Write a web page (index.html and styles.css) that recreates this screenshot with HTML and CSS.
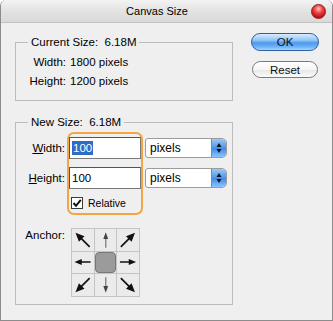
FILE: index.html
```html
<!DOCTYPE html>
<html lang="en">

<head>
    <meta charset="UTF-8">
    <title>Canvas Size</title>
    <link rel="stylesheet" href="styles.css">
</head>

<body>
    <div class="window">
        <div class="titlebar">
            <div class="title">Canvas Size</div>
            <div class="close"></div>
        </div>
        <div class="content">
            <div class="main">
                <fieldset class="group current">
                    <legend>Current Size:&nbsp; 6.18M</legend>
                    <div class="info">
                        <span class="info-label">Width:</span><span>1800 pixels</span>
                        <span class="info-label">Height:</span><span>1200 pixels</span>
                    </div>
                </fieldset>
                <fieldset class="group new">
                    <legend>New Size:&nbsp; 6.18M</legend>
                    <div class="size-row">
                        <div class="labels">
                            <label><u>W</u>idth:</label>
                            <label><u>H</u>eight:</label>
                        </div>
                        <div class="highlight">
                            <div class="field"><span class="selected">100</span></div>
                            <div class="field">100</div>
                            <div class="check-row">
                                <span class="checkbox">
                                    <svg width="10" height="10" viewBox="0 0 10 10">
                                        <polyline points="1.5,5 4,7.8 8.8,1.8" fill="none" stroke="#111" stroke-width="2" />
                                    </svg>
                                </span>
                                Relative
                            </div>
                        </div>
                        <div class="units">
                            <div class="select">
                                <span class="select-text">pixels</span>
                                <span class="stepper">
                                    <svg width="14" height="18" viewBox="0 0 14 18">
                                        <polygon points="7,4 4.5,8 9.5,8" fill="#111" />
                                        <polygon points="7,14 4.5,10 9.5,10" fill="#111" />
                                    </svg>
                                </span>
                            </div>
                            <div class="select">
                                <span class="select-text">pixels</span>
                                <span class="stepper">
                                    <svg width="14" height="18" viewBox="0 0 14 18">
                                        <polygon points="7,4 4.5,8 9.5,8" fill="#111" />
                                        <polygon points="7,14 4.5,10 9.5,10" fill="#111" />
                                    </svg>
                                </span>
                            </div>
                        </div>
                    </div>
                    <div class="anchor-row">
                        <span class="anchor-label">Anchor:</span>
                        <div class="anchor-grid">
                            <div class="cell"><svg class="arrow nw" viewBox="0 0 22 22"><line x1="11" y1="21" x2="11" y2="8" /><polygon points="11,0.5 7,9.5 15,9.5" /></svg></div>
                            <div class="cell"><svg class="arrow n light" viewBox="0 0 22 22"><line x1="11" y1="19" x2="11" y2="8" /><polygon points="11,3 8.5,10 13.5,10" /></svg></div>
                            <div class="cell"><svg class="arrow ne" viewBox="0 0 22 22"><line x1="11" y1="21" x2="11" y2="8" /><polygon points="11,0.5 7,9.5 15,9.5" /></svg></div>
                            <div class="cell"><svg class="arrow w" viewBox="0 0 22 22"><line x1="11" y1="19" x2="11" y2="8" /><polygon points="11,2.5 8,10 14,10" /></svg></div>
                            <div class="cell"><div class="anchor-center"></div></div>
                            <div class="cell"><svg class="arrow e" viewBox="0 0 22 22"><line x1="11" y1="19" x2="11" y2="8" /><polygon points="11,2.5 8,10 14,10" /></svg></div>
                            <div class="cell"><svg class="arrow sw" viewBox="0 0 22 22"><line x1="11" y1="21" x2="11" y2="8" /><polygon points="11,0.5 7,9.5 15,9.5" /></svg></div>
                            <div class="cell"><svg class="arrow s light" viewBox="0 0 22 22"><line x1="11" y1="19" x2="11" y2="8" /><polygon points="11,3 8.5,10 13.5,10" /></svg></div>
                            <div class="cell"><svg class="arrow se" viewBox="0 0 22 22"><line x1="11" y1="21" x2="11" y2="8" /><polygon points="11,0.5 7,9.5 15,9.5" /></svg></div>
                        </div>
                    </div>
                </fieldset>
            </div>
            <div class="buttons">
                <button class="btn btn-ok">OK</button>
                <button class="btn btn-reset">Reset</button>
            </div>
        </div>
    </div>
</body>

</html>
```

FILE: styles.css
```css
* {
    box-sizing: border-box;
}

body {
    margin: 0;
    background-color: #ffffff;
    font-family: "Liberation Sans", Arial, sans-serif;
    font-size: 11.5px;
    color: #000000;
}

.window {
    width: 333px;
    height: 321px;
    background-color: #efefef;
    border: 1px solid #8c8c8c;
    border-top: none;
    border-radius: 6px 6px 0 0;
    overflow: hidden;
}

/* title bar */

.titlebar {
    height: 23px;
    display: flex;
    align-items: center;
    background: linear-gradient(#f3f3f3, #e4e4e4 45%, #d9d9d9);
    border-bottom: 1px solid #c2c2c2;
}

.title {
    flex: 1;
    text-align: center;
    font-size: 11px;
    padding-left: 2px;
}

.close {
    width: 15px;
    height: 15px;
    margin-right: 6px;
    border-radius: 50%;
    border: 1px solid #8e1a1a;
    background: radial-gradient(circle at 50% 30%, #ffc4c4 0, #f04848 35%, #c81414 70%, #9a0a0a 100%);
}

/* layout */

.content {
    display: flex;
    padding: 10px 0 0 14px;
}

.main {
    padding-top: 2px;
}

.group {
    width: 218px;
    margin: 0;
    border: 1px solid #bcbcbc;
}

.group legend {
    padding: 0 3px;
    line-height: 14px;
}

.current {
    padding: 4px 12px 9px 12px;
}

.info {
    display: grid;
    grid-template-columns: 38px auto;
    column-gap: 4px;
    line-height: 19px;
}

.info-label {
    text-align: right;
}

.new {
    margin-top: 14px;
    padding: 3px 4px 7px 8px;
}

.new legend {
    margin-left: 4px;
}

/* size inputs */

.size-row {
    display: flex;
    gap: 2px;
}

.labels {
    width: 41px;
    display: flex;
    flex-direction: column;
    gap: 8px;
    padding-top: 5px;
    text-align: right;
}

.labels label {
    line-height: 22px;
}

.highlight {
    width: 76px;
    display: flex;
    flex-direction: column;
    gap: 8px;
    padding-top: 3px;
    border: 2px solid #f5a445;
    border-radius: 7px;
}

.field {
    height: 22px;
    display: flex;
    align-items: center;
    padding-left: 2px;
    background-color: #ffffff;
    border: 1px solid #7a7a7a;
    border-top-color: #555555;
    border-left-color: #555555;
}

.selected {
    line-height: 14px;
    padding: 0 1px;
    background-color: #3169c6;
    color: #ffffff;
}

.check-row {
    height: 20px;
    margin-top: -4px;
    display: flex;
    align-items: center;
    gap: 5px;
    padding-left: 2px;
    font-size: 10.5px;
}

.checkbox {
    width: 12px;
    height: 12px;
    display: flex;
    align-items: center;
    justify-content: center;
    background-color: #ffffff;
    border: 1px solid #3a3a3a;
}

.units {
    display: flex;
    flex-direction: column;
    gap: 10px;
    padding-top: 6px;
}

.select {
    width: 82px;
    height: 20px;
    display: flex;
    background-color: #ffffff;
    border: 1px solid #9c9c9c;
    border-radius: 3px 5px 5px 3px;
    overflow: hidden;
}

.select-text {
    flex: 1;
    padding-left: 4px;
    line-height: 18px;
    font-size: 12px;
}

.stepper {
    width: 15px;
    display: flex;
    align-items: center;
    justify-content: center;
    border-left: 1px solid #5a8fd6;
    background: linear-gradient(#9cc8f8, #4e95ea 50%, #3f88e4 51%, #8cc4ff);
}

/* anchor */

.anchor-row {
    display: flex;
    gap: 6px;
    margin-top: 13px;
}

.anchor-label {
    width: 41px;
    text-align: right;
    line-height: 14px;
    white-space: nowrap;
}

.anchor-grid {
    display: grid;
    grid-template-columns: repeat(3, 21.5px);
    grid-template-rows: repeat(3, 21.5px);
    gap: 1px;
    padding: 1px;
    background-color: #c4c4c4;
}

.cell {
    display: flex;
    align-items: center;
    justify-content: center;
    background-color: #ebebeb;
}

.arrow {
    width: 22px;
    height: 22px;
}

.arrow line {
    stroke: #111111;
    stroke-width: 1.7;
}

.arrow polygon {
    fill: #111111;
}

.arrow.light line {
    stroke: #8a8a8a;
    stroke-width: 1.5;
}

.arrow.light polygon {
    fill: #444444;
}

.nw { transform: rotate(-45deg); }
.ne { transform: rotate(45deg); }
.e  { transform: rotate(90deg); }
.se { transform: rotate(135deg); }
.s  { transform: rotate(180deg); }
.sw { transform: rotate(-135deg); }
.w  { transform: rotate(-90deg); }

.anchor-center {
    width: 21.5px;
    height: 21.5px;
    background-color: #9b9b9b;
    border: 1px solid #777777;
    border-radius: 4px;
}

/* buttons */

.buttons {
    display: flex;
    flex-direction: column;
    gap: 10px;
    margin-left: 18px;
}

.btn {
    height: 18px;
    padding: 0;
    font-family: "Liberation Sans", Arial, sans-serif;
    font-size: 11.5px;
    color: #111111;
    border-radius: 9px;
}

.btn-ok {
    width: 68px;
    border: 1px solid #2f5f9e;
    background: linear-gradient(#d8ecff, #8fc3f6 40%, #4f99ea 55%, #6cb2fa 80%, #a6d6ff);
}

.btn-reset {
    width: 66px;
    height: 17px;
    margin-left: 1px;
    border: 1px solid #7a7a7a;
    background: linear-gradient(#ffffff, #f6f6f6 50%, #e8e8e8 55%, #fbfbfb);
}
```
